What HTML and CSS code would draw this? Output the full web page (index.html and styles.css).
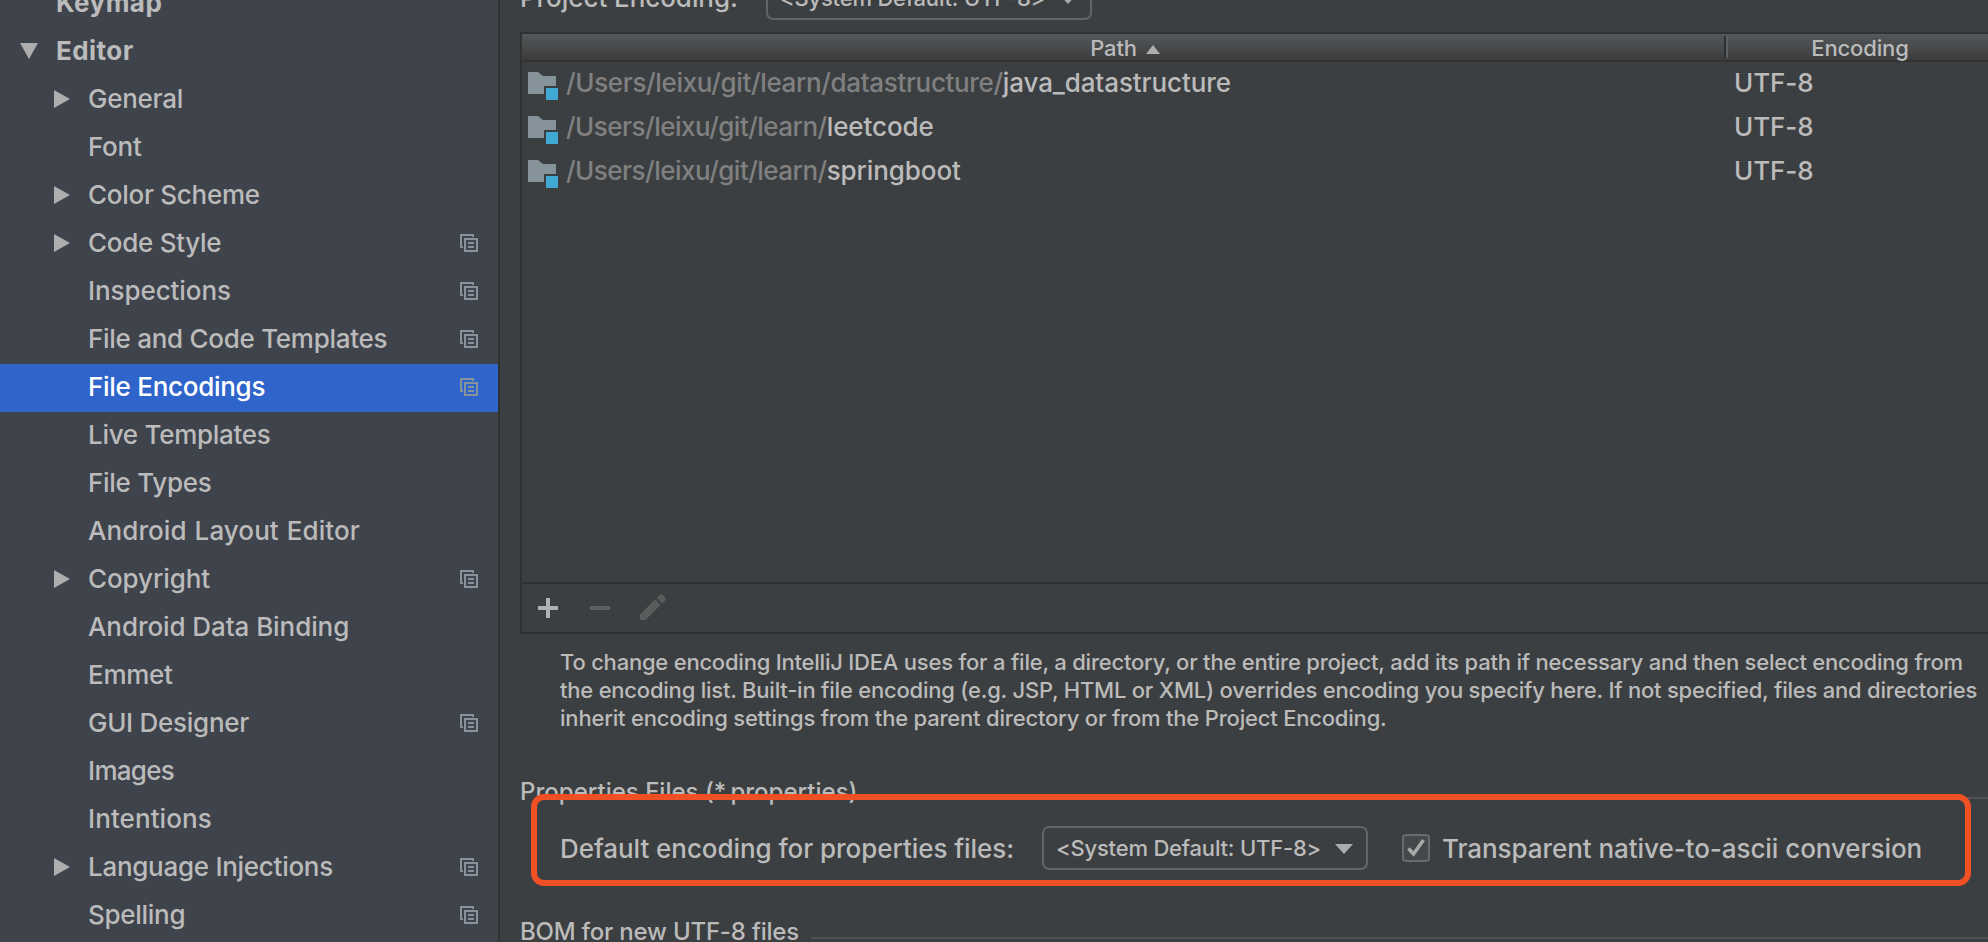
FILE: index.html
```html
<!DOCTYPE html>
<html lang="en">
<head>
<meta charset="utf-8">
<title>File Encodings</title>
<link rel="stylesheet" href="styles.css">
</head>
<body>
<svg width="0" height="0" class="defs">
  <symbol id="copy" viewBox="0 0 18 18"><path d="M3 13H1V1h12v2" fill="none" stroke="currentColor" stroke-width="2"/><path d="M5 5h12v12H5zM8 9h6M8 13h6" fill="none" stroke="currentColor" stroke-width="2"/></symbol>
  <symbol id="right" viewBox="0 0 16 18"><path d="M0 0l16 9L0 18z" fill="currentColor"/></symbol>
  <symbol id="down" viewBox="0 0 18 16"><path d="M0 0h18L9 16z" fill="currentColor"/></symbol>
  <symbol id="folder" viewBox="0 0 32 32"><path d="M2 4h10l5 4h13v10H18v8H2z" fill="#87939a"/><path d="M20 20h12v12H20z" fill="#40a9d3"/></symbol>
</svg>
<div class="window">
  <nav class="sidebar">
    <div class="row top"><span class="label">Keymap</span></div>
    <div class="row top"><svg class="arrow open"><use href="#down"/></svg><span class="label">Editor</span></div>
    <div class="row"><svg class="arrow"><use href="#right"/></svg><span class="label">General</span></div>
    <div class="row"><span class="label">Font</span></div>
    <div class="row"><svg class="arrow"><use href="#right"/></svg><span class="label">Color Scheme</span></div>
    <div class="row"><svg class="arrow"><use href="#right"/></svg><span class="label">Code Style</span><svg class="copy"><use href="#copy"/></svg></div>
    <div class="row"><span class="label loose">Inspections</span><svg class="copy"><use href="#copy"/></svg></div>
    <div class="row"><span class="label">File and Code Templates</span><svg class="copy"><use href="#copy"/></svg></div>
    <div class="row selected"><span class="label">File Encodings</span><svg class="copy"><use href="#copy"/></svg></div>
    <div class="row"><span class="label">Live Templates</span></div>
    <div class="row"><span class="label">File Types</span></div>
    <div class="row"><span class="label wide">Android Layout Editor</span></div>
    <div class="row"><svg class="arrow"><use href="#right"/></svg><span class="label loose">Copyright</span><svg class="copy"><use href="#copy"/></svg></div>
    <div class="row"><span class="label loose">Android Data Binding</span></div>
    <div class="row"><span class="label">Emmet</span></div>
    <div class="row"><span class="label">GUI Designer</span><svg class="copy"><use href="#copy"/></svg></div>
    <div class="row"><span class="label tight">Images</span></div>
    <div class="row"><span class="label wide">Intentions</span></div>
    <div class="row"><svg class="arrow"><use href="#right"/></svg><span class="label">Language Injections</span><svg class="copy"><use href="#copy"/></svg></div>
    <div class="row"><span class="label">Spelling</span><svg class="copy"><use href="#copy"/></svg></div>
  </nav>
  <main class="content">
    <div class="field project">
      <span class="caption">Project Encoding:</span>
      <div class="combo"><span>&lt;System Default: UTF-8&gt;</span><svg class="chevron" viewBox="0 0 18 10"><path d="M0 0h18L9 10z" fill="currentColor"/></svg></div>
    </div>
    <section class="table">
      <header class="thead">
        <div class="th path">Path<svg class="sort" viewBox="0 0 14 9"><path d="M0 9L7 0l7 9z" fill="currentColor"/></svg></div>
        <div class="th enc">Encoding</div>
      </header>
      <div class="tbody">
        <div class="tr"><svg class="folder"><use href="#folder"/></svg><span class="file"><span class="dim long">/Users/leixu/git/learn/datastructure/</span>java_datastructure</span><span class="utf">UTF-8</span></div>
        <div class="tr"><svg class="folder"><use href="#folder"/></svg><span class="file"><span class="dim">/Users/leixu/git/learn/</span>leetcode</span><span class="utf">UTF-8</span></div>
        <div class="tr"><svg class="folder"><use href="#folder"/></svg><span class="file"><span class="dim">/Users/leixu/git/learn/</span>springboot</span><span class="utf">UTF-8</span></div>
      </div>
      <footer class="toolbar">
        <svg class="tool" viewBox="0 0 32 32"><path d="M16 6v20M6 16h20" stroke="#afb1b3" stroke-width="4"/></svg>
        <svg class="tool" viewBox="0 0 32 32"><path d="M6 16h20" stroke="#5e5f60" stroke-width="4"/></svg>
        <svg class="tool" viewBox="0 0 32 32"><path d="M4 22.500L19 7.500l5.500 5.500-15 15H4zM20.500 5.800l2.500-2.500q2-2 4 0l1.700 1.700q2 2 0 4l-2.500 2.500z" fill="#5a5b5b"/></svg>
      </footer>
    </section>
    <p class="note"><span class="l1">To change encoding IntelliJ IDEA uses for a file, a directory, or the entire project, add its path if necessary and then select encoding from</span><br><span class="l2">the encoding list. Built-in file encoding (e.g. JSP, HTML or XML) overrides encoding you specify here. If not specified, files and directories</span><br><span class="l3">inherit encoding settings from the parent directory or from the Project Encoding.</span></p>
    <div class="group props"><span>Properties Files (*.properties)</span><i class="rule"></i></div>
    <div class="field properties">
      <span class="caption">Default encoding for properties files:</span>
      <div class="combo"><span>&lt;System Default: UTF-8&gt;</span><svg class="chevron" viewBox="0 0 18 10"><path d="M0 0h18L9 10z" fill="currentColor"/></svg></div>
      <svg class="check" viewBox="0 0 28 28"><rect x="1" y="1" width="26" height="26" rx="3" fill="#43494a" stroke="#6b6b6b" stroke-width="2"/><path d="M6.500 14.500l5 5.500L21.500 6" fill="none" stroke="#a9a9a9" stroke-width="3.500"/></svg>
      <span class="ascii">Transparent native-to-ascii conversion</span>
    </div>
    <div class="group bom"><span>BOM for new UTF-8 files</span><i class="rule"></i></div>
    <div class="highlight"></div>
  </main>
</div>
</body>
</html>
```
FILE: styles.css
```css
* { box-sizing: border-box; }
body { margin: 0; background: #3c3f41; color: #bbb; font: 450 26px/48px Inter, "Liberation Sans", sans-serif; overflow: hidden; }
.defs { position: absolute; }
.window { display: flex; width: 1988px; height: 942px; overflow: hidden; }
.sidebar { flex: none; width: 500px; height: 942px; background: #3f434c; border-right: 2px solid #323232; overflow: hidden; }
.row { display: flex; align-items: center; height: 48px; padding: 0 20px 2px 88px; white-space: nowrap; letter-spacing: -0.28px; }
.row:first-child { margin-top: -20px; }
.top { padding-left: 56px; font-weight: 700; letter-spacing: 0.45px; }
.loose { letter-spacing: -0.08px; }
.wide { letter-spacing: 0.08px; word-spacing: 1px; }
.tight { letter-spacing: -0.7px; }
.selected { background: #2f65ca; color: #fff; }
.arrow { flex: none; width: 16px; height: 18px; margin: 0 18px 0 -34px; color: #adadad; }
.open { width: 18px; height: 16px; margin: 0 18px 0 -36px; }
.copy { flex: none; width: 18px; height: 18px; margin-left: auto; color: #87939a; }
.content { position: relative; flex: 1; height: 942px; padding-left: 20px; overflow: hidden; }
.field { display: flex; align-items: center; height: 44px; white-space: nowrap; letter-spacing: -0.06px; }
.project { margin-top: -24px; }
.project .caption { width: 246px; }
.combo { display: flex; align-items: center; justify-content: space-between; width: 326px; height: 44px; padding: 0 13px 0 12px; border: 2px solid #646464; border-radius: 7px; font-size: 22px; line-height: 40px; letter-spacing: -0.2px; }
.chevron { width: 18px; height: 10px; margin-top: 2px; color: #adadad; }
.table { margin-top: 12px; width: 1468px; height: 602px; border: 2px solid #323232; border-right: 0; display: flex; flex-direction: column; }
.thead { display: flex; height: 28px; border-bottom: 2px solid #323232; background: linear-gradient(#54585a, #3c3c3d); font-size: 22px; line-height: 28px; }
.th { display: flex; align-items: center; justify-content: center; padding-top: 2px; letter-spacing: -0.15px; }
.path { width: 1206px; gap: 9px; }
.sort { width: 14px; height: 9px; margin-top: 2px; color: #adadad; }
.enc { position: relative; width: 260px; padding-left: 4px; }
.enc::before { content: ""; width: 0; height: 22px; border-left: 2px solid #2d2e2f; border-right: 2px solid #5c5f61; position: absolute; left: -4px; top: 2px; }
.tbody { flex: 1; }
.tr { display: flex; align-items: center; height: 44px; line-height: 42px; white-space: nowrap; letter-spacing: -0.1px; }
.folder { flex: none; width: 32px; height: 32px; margin-left: 4px; }
.file { width: 1169px; padding: 0 0 2px 8px; }
.dim { color: #808080; letter-spacing: -0.52px; }
.long { letter-spacing: -0.35px; }
.utf { padding: 0 0 2px 7px; }
.toolbar { display: flex; gap: 20px; align-items: center; height: 50px; padding-left: 10px; border-top: 2px solid #323232; }
.tool { width: 32px; height: 32px; }
.note { margin: 14px 0 0 40px; font-size: 22px; line-height: 28px; white-space: nowrap; letter-spacing: -0.22px; }
.l3 { letter-spacing: -0.2px; }
.group { display: flex; align-items: center; gap: 12px; height: 32px; font-size: 24px; line-height: 32px; white-space: nowrap; }
.rule { flex: 1; height: 2px; background: #515354; }
.props { margin-top: 44px; letter-spacing: 0.02px; }
.props .rule { margin-top: 12px; }
.properties { margin-top: 18px; padding-left: 40px; }
.properties .caption { width: 482px; padding-top: 1px; }
.check { width: 28px; height: 28px; margin-left: 34px; }
.ascii { margin-left: 12px; padding-top: 1px; }
.bom { margin-top: 46px; letter-spacing: -0.22px; }
.bom .rule { margin-top: 12px; }
.highlight { position: absolute; left: 31px; top: 794px; width: 1440px; height: 92px; border: 6px solid #f15025; border-radius: 13px; }
```
